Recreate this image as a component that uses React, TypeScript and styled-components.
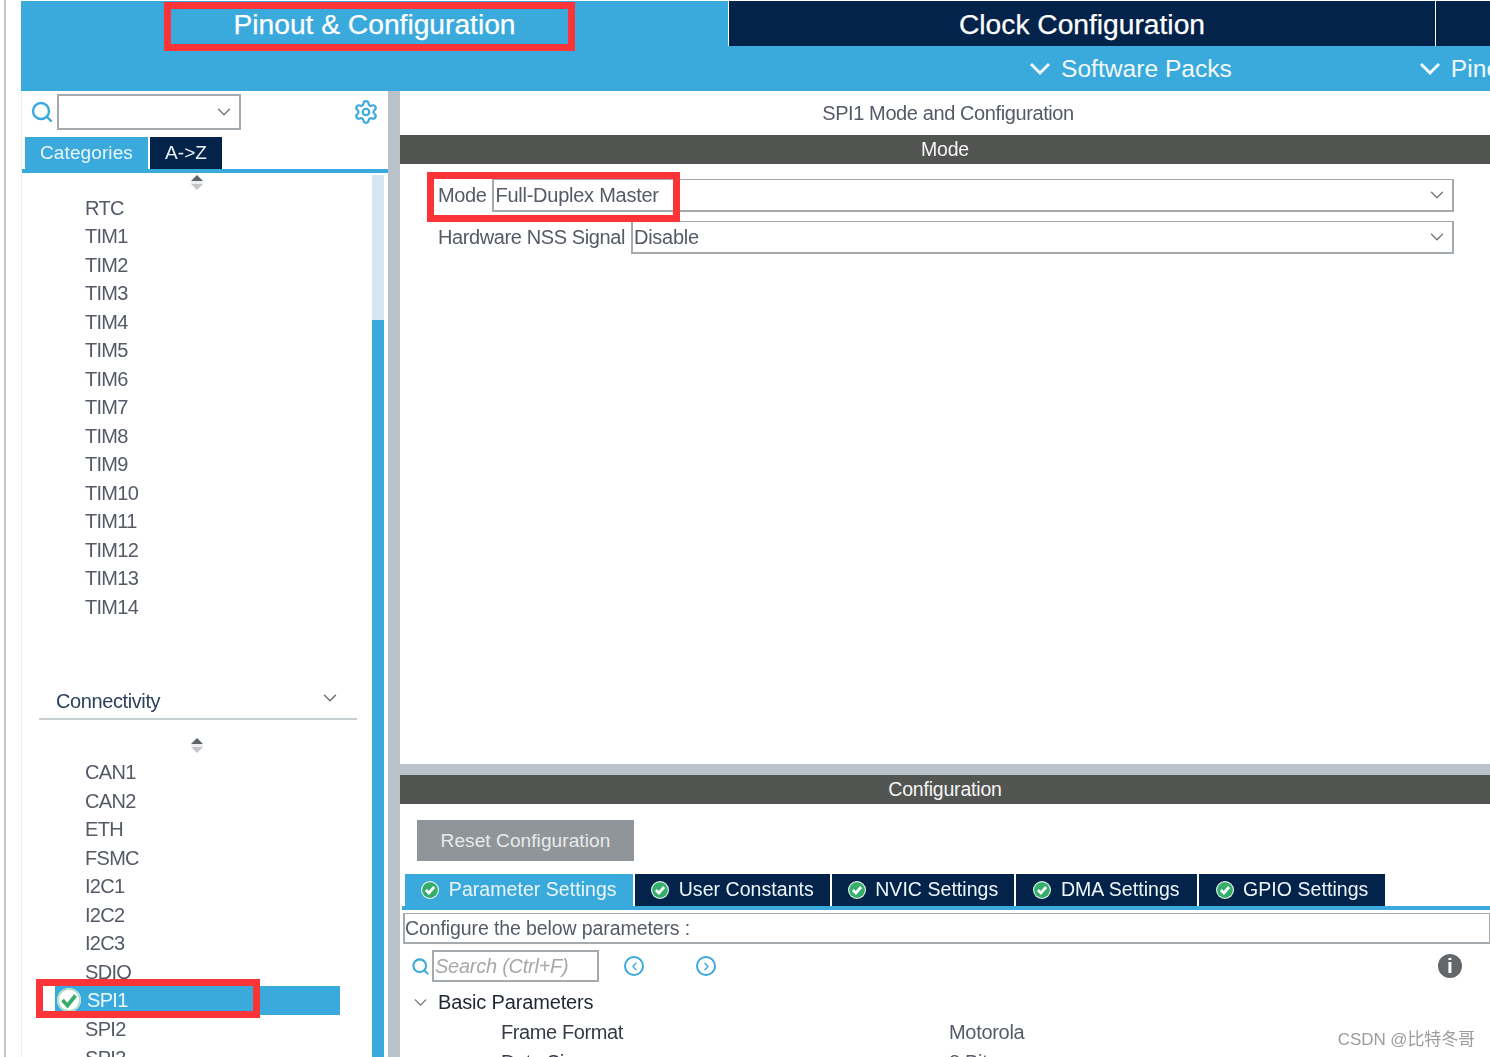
import React from "react";
import styled, { createGlobalStyle } from "styled-components";
import { ChevronDown, Search, Settings, ChevronLeft, ChevronRight } from "lucide-react";

const BLUE = "#3aa9dc";
const NAVY = "#03234b";
const GRAPHITE = "#525452";
const SPLIT = "#b8c2c8";
const FIELD = "#a4aaae";
const TEXT = "#545a66";

const Global = createGlobalStyle`
  html, body { margin: 0; padding: 0; background: #fff; overflow: hidden; }
  * { box-sizing: border-box; }
  body { font-family: "Liberation Sans", Arial, sans-serif; }
`;

const Page = styled.div`
  position: relative; display: flex; width: 1490px; height: 1057px; overflow: hidden; background: #fff;
`;
const Gutter = styled.div`
  width: 21px; flex: none; padding-left: 4px;
  &::before { content: ""; display: block; width: 2px; height: 100%; background: #c4c6c8; }
`;
const Main = styled.div`
  flex: none; width: 1469px; display: flex; flex-direction: column; padding-top: 1px; filter: blur(0.35px);
`;
const TopBar = styled.header`
  height: 90px; flex: none; background: ${BLUE}; display: flex; flex-direction: column;
`;
const TopTabs = styled.div`
  display: flex; height: 45px; flex: none; gap: 1px;
`;
const TopTab = styled.div<{ $active?: boolean; $w: number }>`
  flex: none; width: ${p => p.$w}px; display: flex; align-items: center; justify-content: center;
  background: ${p => (p.$active ? BLUE : NAVY)}; color: #fff; font-size: 28.2px; padding-top: 1px;
  -webkit-text-stroke: .25px #fff;
  ${p => (p.$active ? "" : "box-shadow: -1px 0 0 #fff;")}
`;
const SubBar = styled.div`
  flex: 1; display: flex; align-items: center; padding: 1px 0 0 1008px; gap: 187px; white-space: nowrap; overflow: hidden;
`;
const SubItem = styled.div`
  display: flex; align-items: center; gap: 10px; color: #f2fafd; font-size: 24.6px;
`;
const Body = styled.div`
  flex: 1; display: flex; min-height: 0;
`;
const Left = styled.aside`
  width: 367px; flex: none; display: flex; flex-direction: column; padding-left: 1px; border-left: 1px solid #eceeef;
`;
const SearchRow = styled.div`
  height: 46px; flex: none; display: flex; align-items: center; padding: 0 9px 4px 7px;
`;
const Combo = styled.div`
  width: 184px; height: 36px; margin-left: 3px; border: 2px solid ${FIELD}; display: flex; align-items: center;
  justify-content: flex-end; padding-right: 4px; color: #777;
`;
const Gear = styled.div`
  margin-left: auto; display: flex; color: ${BLUE};
`;
const SideTabs = styled.div`
  display: flex; height: 32px; flex: none; gap: 2px; padding-left: 2px;
`;
const SideTab = styled.div<{ $active?: boolean; $w: number }>`
  width: ${p => p.$w}px; display: flex; align-items: center; justify-content: center; color: #eaf6fb;
  font-size: 19px; letter-spacing: .1px; padding-bottom: 1px; background: ${p => (p.$active ? BLUE : NAVY)};
`;
const SideRule = styled.div`
  height: 4px; flex: none; background: ${BLUE}; margin-left: -1px;
`;
const ListWrap = styled.div`
  flex: 1; display: flex; min-height: 0; padding-top: 2px;
`;
const ListCol = styled.div`
  width: 349px; flex: none; overflow: hidden;
`;
const Track = styled.div`
  width: 12px; flex: none; display: flex; flex-direction: column; background: #d8e6f3;
`;
const Thumb = styled.div`
  margin-top: 145px; flex: 1; background: ${BLUE};
`;
const Spin = styled.div<{ $top: number; $bottom: number }>`
  display: flex; justify-content: center; padding-right: 1px;
  margin-top: ${p => p.$top}px; margin-bottom: ${p => p.$bottom}px; height: 15px;
`;
const Item = styled.div`
  height: 28.5px; display: flex; align-items: center; padding: 2px 0 0 62px; font-size: 20px; letter-spacing: -.7px; color: ${TEXT};
`;
const ItemSelected = styled.div`
  height: 29px; margin-left: 32px; width: 285px; display: flex; align-items: center; gap: 6px; padding-left: 2px;
  background: ${BLUE}; color: #eef9fd; font-size: 20px; letter-spacing: -.7px;
`;
const Section = styled.div`
  margin: 66px 15px 0 16px; height: 33px; border-bottom: 2px solid #c8d0d4; display: flex; align-items: center;
  justify-content: space-between; padding: 0 16px 2px 17px; color: #2c405f; font-size: 20px; letter-spacing: -.4px;
`;
const SectionChevron = styled.div`
  display: flex; margin-top: -6px; color: #6a7076;
`;
const Splitter = styled.div`
  width: 12px; flex: none; background: ${SPLIT};
`;
const Right = styled.main`
  flex: 1; min-width: 0; display: flex; flex-direction: column;
`;
const Title = styled.div`
  height: 44px; flex: none; display: flex; align-items: center; justify-content: center; padding-left: 6px;
  font-size: 20px; letter-spacing: -.4px; color: ${TEXT};
`;
const Band = styled.div`
  height: 29px; flex: none; display: flex; align-items: center; justify-content: center; background: ${GRAPHITE};
  color: #f4f4f4; font-size: 19.5px; letter-spacing: -.2px;
`;
const ModePane = styled.section`
  height: 600px; flex: none; display: flex; flex-direction: column; gap: 9px; padding: 15px 36px 0 38px;
`;
const FormRow = styled.div`
  display: flex; align-items: center; height: 33px; font-size: 20px; letter-spacing: -.4px; color: ${TEXT}; white-space: nowrap;
`;
const Select = styled.div`
  flex: 1; height: 33px; margin-left: 6px; border: 2px solid ${FIELD}; border-top-width: 1px; display: flex; align-items: center;
  justify-content: space-between; padding: 0 4px 0 1px; color: ${TEXT}; letter-spacing: -.25px;
`;
const PaneGap = styled.div`
  height: 11px; flex: none; background: ${SPLIT};
`;
const ConfigPane = styled.section`
  flex: 1; min-height: 0; display: flex; flex-direction: column; overflow: hidden;
`;
const ResetButton = styled.div`
  flex: none; margin: 16px 0 13px 17px; width: 217px; height: 41px; display: flex; align-items: center; justify-content: center;
  background: #8f9599; color: #e8eaeb; font-size: 19px; letter-spacing: .1px;
`;
const ConfTabs = styled.div`
  display: flex; height: 32px; flex: none; gap: 2px; padding-left: 5px;
`;
const ConfTab = styled.div<{ $active?: boolean; $w: number }>`
  width: ${p => p.$w}px; display: flex; align-items: center; justify-content: center; gap: 9.5px; flex: none;
  background: ${p => (p.$active ? BLUE : NAVY)}; color: #edf6fa; font-size: 19.5px; letter-spacing: .05px; padding-bottom: 1px;
`;
const ConfRule = styled.div`
  height: 4px; flex: none; margin-left: 2px; background: ${BLUE};
`;
const Hint = styled.div`
  flex: none; height: 31px; margin: 3px 0 0 3px; border: 2px solid ${FIELD}; border-top-width: 1px; border-right-width: 1px;
  display: flex; align-items: center; padding-left: 0; color: ${TEXT}; font-size: 19.5px; letter-spacing: -.1px;
`;
const Tools = styled.div`
  flex: none; height: 32px; margin-top: 6px; display: flex; align-items: center; padding-left: 11px; color: ${BLUE};
`;
const SearchField = styled.div`
  width: 167px; height: 32px; margin-left: 2px; border: 2px solid ${FIELD}; display: flex; align-items: center; padding-left: 1px;
  color: #a6a8aa; font-style: italic; font-size: 20px; letter-spacing: -.25px;
`;
const RoundNav = styled.div<{ $left: number }>`
  width: 20px; height: 20px; margin-left: ${p => p.$left}px; border: 2px solid ${BLUE}; border-radius: 50%;
  display: flex; align-items: center; justify-content: center; flex: none;
`;
const Info = styled.div`
  margin-left: auto; margin-right: 28px; width: 24px; height: 24px; border-radius: 50%; background: #63676a; color: #fff;
  display: flex; align-items: center; justify-content: center; font: bold 21px "Liberation Sans", sans-serif;
`;
const TreeHead = styled.div`
  flex: none; height: 30px; margin-top: 5px; display: flex; align-items: center; gap: 7px; padding-left: 10px;
  color: #1f2733; font-size: 20px; letter-spacing: -.15px;
`;
const Param = styled.div`
  flex: none; height: 30px; display: grid; grid-template-columns: 448px 1fr; align-items: center; padding-left: 101px;
  color: #353b45; font-size: 20px; letter-spacing: -.4px;
`;
const ParamValue = styled.span`
  color: ${TEXT}; letter-spacing: -.3px;
`;
const Mark = styled.div<{ $x: number; $y: number; $w: number; $h: number }>`
  position: absolute; left: ${p => p.$x}px; top: ${p => p.$y}px; width: ${p => p.$w}px; height: ${p => p.$h}px;
  border: 7px solid #fb3537; pointer-events: none;
`;
const Watermark = styled.div`
  position: absolute; right: 15px; top: 1029px; color: #9c9c9c; font-size: 17px; line-height: 22px;
  font-family: "Liberation Sans", "Noto Sans CJK SC", sans-serif; letter-spacing: -.1px;
`;

const ScrollMark = () => (
  <svg width="14" height="15" viewBox="0 0 14 15">
    <path d="M7 0 L13 6 H1 Z" fill="#5f6468" />
    <path d="M7 15 L13 9 H1 Z" fill="#c3c6c8" />
    <rect x="1" y="6" width="12" height="3" fill="#eceeef" />
  </svg>
);
const Check = () => (
  <svg width="18" height="18" viewBox="0 0 24 24" style={{ flex: "none" }}>
    <circle cx="12" cy="12" r="12" fill="#e4f4ec" />
    <circle cx="12" cy="12" r="10.5" fill="#35ad6b" />
    <path d="M6.5 12 L10.5 16 L17.5 8" fill="none" stroke="#fff" strokeWidth="3.6" />
  </svg>
);
const LargeCheck = () => (
  <svg width="24" height="24" viewBox="0 0 24 24" style={{ flex: "none" }}>
    <circle cx="12" cy="12" r="12" fill="#fff" />
    <circle cx="12" cy="12" r="11" fill="none" stroke="#a9dcc0" strokeWidth="1.6" />
    <path d="M5.5 12 L10.5 17.5 L18.5 7.5" fill="none" stroke="#35ad6b" strokeWidth="3.8" />
  </svg>
);

const timers = ["RTC","TIM1","TIM2","TIM3","TIM4","TIM5","TIM6","TIM7","TIM8","TIM9","TIM10","TIM11","TIM12","TIM13","TIM14"];
const connBefore = ["CAN1","CAN2","ETH","FSMC","I2C1","I2C2","I2C3","SDIO"];
const tabs: [string, number, boolean?][] = [
  ["Parameter Settings", 228, true],
  ["User Constants", 195],
  ["NVIC Settings", 182],
  ["DMA Settings", 181],
  ["GPIO Settings", 186],
];
const Chevron = () => (
  <svg width="22" height="14" viewBox="0 0 22 14" fill="none" stroke="currentColor" strokeWidth="3"><path d="M2 2 L11 11 L20 2" /></svg>
);

export default function App() {
  return (
    <Page>
      <Global />
      <Gutter />
      <Main>
        <TopBar>
          <TopTabs>
            <TopTab $active $w={707}>Pinout &amp; Configuration</TopTab>
            <TopTab $w={706}>Clock Configuration</TopTab>
            <TopTab $w={54} />
          </TopTabs>
          <SubBar>
            <SubItem><Chevron />Software Packs</SubItem>
            <SubItem><Chevron />Pinout</SubItem>
          </SubBar>
        </TopBar>
        <Body>
          <Left>
            <SearchRow>
              <Search size={24} color={BLUE} strokeWidth={2.4} />
              <Combo><ChevronDown size={22} strokeWidth={1.6} /></Combo>
              <Gear><Settings size={26} strokeWidth={2} /></Gear>
            </SearchRow>
            <SideTabs>
              <SideTab $active $w={123}>Categories</SideTab>
              <SideTab $w={72}>A-&gt;Z</SideTab>
            </SideTabs>
            <SideRule />
            <ListWrap>
              <ListCol>
                <Spin $top={0} $bottom={3}><ScrollMark /></Spin>
                {timers.map(t => <Item key={t}>{t}</Item>)}
                <Section>Connectivity<SectionChevron><ChevronDown size={22} strokeWidth={1.6} /></SectionChevron></Section>
                <Spin $top={18} $bottom={5}><ScrollMark /></Spin>
                {connBefore.map(t => <Item key={t}>{t}</Item>)}
                <ItemSelected><LargeCheck />SPI1</ItemSelected>
                <Item>SPI2</Item>
                <Item>SPI3</Item>
              </ListCol>
              <Track><Thumb /></Track>
            </ListWrap>
          </Left>
          <Splitter />
          <Right>
            <Title>SPI1 Mode and Configuration</Title>
            <Band>Mode</Band>
            <ModePane>
              <FormRow>Mode<Select>Full-Duplex Master<ChevronDown size={22} strokeWidth={1.5} color="#777" /></Select></FormRow>
              <FormRow>Hardware NSS Signal<Select>Disable<ChevronDown size={22} strokeWidth={1.5} color="#777" /></Select></FormRow>
            </ModePane>
            <PaneGap />
            <Band>Configuration</Band>
            <ConfigPane>
              <ResetButton>Reset Configuration</ResetButton>
              <ConfTabs>
                {tabs.map(([label, w, active]) => (
                  <ConfTab key={label} $w={w} $active={active}><Check />{label}</ConfTab>
                ))}
              </ConfTabs>
              <ConfRule />
              <Hint>Configure the below parameters :</Hint>
              <Tools>
                <Search size={19} strokeWidth={2.6} />
                <SearchField>Search (Ctrl+F)</SearchField>
                <RoundNav $left={25}><ChevronLeft size={13} strokeWidth={2.4} /></RoundNav>
                <RoundNav $left={52}><ChevronRight size={13} strokeWidth={2.4} /></RoundNav>
                <Info>i</Info>
              </Tools>
              <TreeHead><ChevronDown size={21} strokeWidth={1.5} color="#6a7076" />Basic Parameters</TreeHead>
              <Param><span>Frame Format</span><ParamValue>Motorola</ParamValue></Param>
              <Param><span>Data Size</span><ParamValue>8 Bits</ParamValue></Param>
            </ConfigPane>
          </Right>
        </Body>
      </Main>
      <Mark $x={164} $y={2} $w={411} $h={49} />
      <Mark $x={427} $y={172} $w={253} $h={50} />
      <Mark $x={36} $y={979} $w={224} $h={39} />
      <Watermark>CSDN @比特冬哥</Watermark>
    </Page>
  );
}
